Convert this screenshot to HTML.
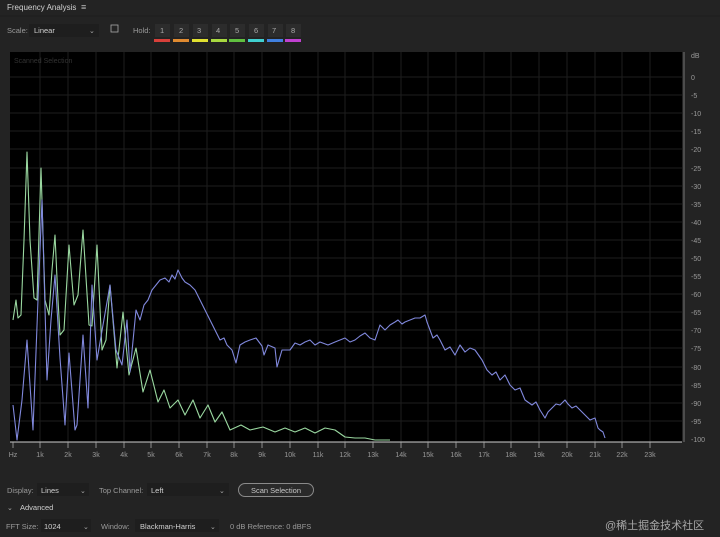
<!DOCTYPE html>
<html><head><meta charset="utf-8"><style>
html,body{margin:0;padding:0;background:#232323;width:720px;height:537px;overflow:hidden;font-family:"Liberation Sans","Noto Sans CJK SC",sans-serif;}
svg text{font-family:"Liberation Sans","Noto Sans CJK SC",sans-serif;}
</style></head><body>
<svg width="720" height="537" viewBox="0 0 720 537" xmlns="http://www.w3.org/2000/svg">
<rect width="720" height="537" fill="#232323"/>
<text x="7" y="10" font-size="8" fill="#d0d0d0">Frequency Analysis</text>
<text x="81" y="10" font-size="9" fill="#bbb">≡</text>
<line x1="0" y1="16" x2="720" y2="16" stroke="#1c1c1c"/>
<text x="7" y="33" font-size="7.5" fill="#9a9a9a">Scale:</text>
<rect x="29" y="24" width="70" height="13" fill="#1e1e1e"/>
<text x="34" y="33" font-size="7.5" fill="#d0d0d0">Linear</text>
<text x="89" y="33" font-size="7" fill="#aaa">⌄</text>
<rect x="111" y="25" width="7" height="7" fill="none" stroke="#aaa" stroke-width="0.8"/>
<text x="133" y="33" font-size="7.5" fill="#9a9a9a">Hold:</text>
<g font-size="7.5" fill="#aaa">
<rect x="155" y="24" width="15" height="13" fill="#2c2c2c"/><text x="160" y="33">1</text>
<rect x="174" y="24" width="15" height="13" fill="#2c2c2c"/><text x="179" y="33">2</text>
<rect x="193" y="24" width="15" height="13" fill="#2c2c2c"/><text x="197" y="33">3</text>
<rect x="212" y="24" width="15" height="13" fill="#2c2c2c"/><text x="216" y="33">4</text>
<rect x="230" y="24" width="15" height="13" fill="#2c2c2c"/><text x="235" y="33">5</text>
<rect x="249" y="24" width="15" height="13" fill="#2c2c2c"/><text x="254" y="33">6</text>
<rect x="268" y="24" width="15" height="13" fill="#2c2c2c"/><text x="272" y="33">7</text>
<rect x="286" y="24" width="15" height="13" fill="#2c2c2c"/><text x="291" y="33">8</text>
</g>
<rect x="154" y="39" width="16" height="3" fill="#d8403a"/>
<rect x="173" y="39" width="16" height="3" fill="#e08a30"/>
<rect x="192" y="39" width="16" height="3" fill="#e0e030"/>
<rect x="211" y="39" width="16" height="3" fill="#a8d840"/>
<rect x="229" y="39" width="16" height="3" fill="#60c040"/>
<rect x="248" y="39" width="16" height="3" fill="#40d0d0"/>
<rect x="267" y="39" width="16" height="3" fill="#4080e0"/>
<rect x="285" y="39" width="16" height="3" fill="#c040d0"/>
<rect x="10" y="52" width="672" height="390" fill="#000"/>
<g stroke="#1e1e1e" stroke-width="1">
<path d="M40 52V442M68 52V442M96 52V442M124 52V442M151 52V442M179 52V442M207 52V442M234 52V442M262 52V442M290 52V442M318 52V442M345 52V442M373 52V442M401 52V442M428 52V442M456 52V442M484 52V442M511 52V442M539 52V442M567 52V442M595 52V442M622 52V442M650 52V442"/>
<path d="M10 77H682M10 95H682M10 113H682M10 131H682M10 149H682M10 168H682M10 186H682M10 204H682M10 222H682M10 240H682M10 258H682M10 276H682M10 294H682M10 312H682M10 330H682M10 348H682M10 367H682M10 385H682M10 403H682M10 421H682"/>
</g>
<text x="14" y="63" font-size="7" fill="#333">Scanned Selection</text>
<polyline fill="none" stroke="#9ad8a0" stroke-width="1.1" stroke-linejoin="round" points="13,320 16,300 18,318 21,315 24,240 27,152 30,240 34,298 37,300 41,168 45,300 49,315 52,270 55,235 58,300 60,335 64,330 69,245 74,305 78,295 83,230 89,325 92,326 97,245 102,350 106,340 110,285 117,368 123,312 129,375 136,348 143,392 150,370 158,402 164,390 170,408 178,400 185,415 193,400 200,418 208,405 215,422 222,412 230,430 241,425 250,430 263,427 275,432 285,428 295,432 305,428 315,433 325,428 335,430 345,437 355,438 365,438 375,440 390,440"/>
<polyline fill="none" stroke="#8088dc" stroke-width="1.1" stroke-linejoin="round" points="13,405 17,440 22,400 27,340 33,430 38,300 42,200 47,380 51,320 55,275 60,358 65,425 69,353 75,430 77,425 83,335 88,408 92,285 97,360 103,325 110,285 116,350 122,365 127,320 130,372 136,310 140,320 144,305 148,300 152,290 156,285 160,280 165,278 169,282 172,275 175,279 178,270 182,278 185,282 190,285 195,290 200,300 205,310 210,320 215,330 220,340 224,338 227,345 232,350 236,363 240,345 245,342 250,340 256,338 262,346 264,355 268,345 275,348 277,367 282,350 290,350 295,343 300,345 305,342 310,340 315,345 320,342 328,345 335,342 340,340 345,338 350,342 355,340 360,336 365,333 370,338 375,340 380,325 385,330 390,325 395,322 398,320 402,324 405,322 410,320 415,318 420,318 425,315 427,322 433,338 437,335 440,340 445,350 450,347 455,355 460,345 465,352 470,348 475,350 482,360 487,370 492,375 496,372 500,380 505,375 510,385 515,390 520,388 525,400 532,405 536,402 540,410 545,418 548,412 552,408 556,404 560,405 565,400 568,404 572,408 576,406 580,410 585,415 590,420 595,418 598,428 600,430 603,432 605,438"/>
<line x1="10" y1="442" x2="682" y2="442" stroke="#cfcfcf" stroke-width="1"/>
<g stroke="#aaa" stroke-width="0.8">
<path d="M13 442v6M40 442v6M68 442v6M96 442v6M124 442v6M151 442v6M179 442v6M207 442v6M234 442v6M262 442v6M290 442v6M318 442v6M345 442v6M373 442v6M401 442v6M428 442v6M456 442v6M484 442v6M511 442v6M539 442v6M567 442v6M595 442v6M622 442v6M650 442v6"/>
</g>
<g font-size="7" fill="#9a9a9a" text-anchor="middle">
<text x="13" y="457">Hz</text><text x="40" y="457">1k</text><text x="68" y="457">2k</text><text x="96" y="457">3k</text><text x="124" y="457">4k</text><text x="151" y="457">5k</text><text x="179" y="457">6k</text><text x="207" y="457">7k</text><text x="234" y="457">8k</text><text x="262" y="457">9k</text><text x="290" y="457">10k</text><text x="318" y="457">11k</text><text x="345" y="457">12k</text><text x="373" y="457">13k</text><text x="401" y="457">14k</text><text x="428" y="457">15k</text><text x="456" y="457">16k</text><text x="484" y="457">17k</text><text x="511" y="457">18k</text><text x="539" y="457">19k</text><text x="567" y="457">20k</text><text x="595" y="457">21k</text><text x="622" y="457">22k</text><text x="650" y="457">23k</text>
</g>
<line x1="684" y1="52" x2="684" y2="442" stroke="#8a8a8a" stroke-width="0.8"/>
<g font-size="7" fill="#9a9a9a">
<text x="691" y="58">dB</text><text x="691" y="80">0</text><text x="691" y="98">-5</text><text x="691" y="116">-10</text><text x="691" y="134">-15</text><text x="691" y="152">-20</text><text x="691" y="171">-25</text><text x="691" y="189">-30</text><text x="691" y="207">-35</text><text x="691" y="225">-40</text><text x="691" y="243">-45</text><text x="691" y="261">-50</text><text x="691" y="279">-55</text><text x="691" y="297">-60</text><text x="691" y="315">-65</text><text x="691" y="333">-70</text><text x="691" y="351">-75</text><text x="691" y="370">-80</text><text x="691" y="388">-85</text><text x="691" y="406">-90</text><text x="691" y="424">-95</text><text x="691" y="442">-100</text>
</g>
<text x="7" y="493" font-size="7.5" fill="#9a9a9a">Display:</text>
<rect x="37" y="483" width="52" height="13" fill="#1e1e1e"/>
<text x="41" y="493" font-size="7.5" fill="#d0d0d0">Lines</text>
<text x="80" y="493" font-size="7" fill="#aaa">⌄</text>
<text x="99" y="493" font-size="7.5" fill="#9a9a9a">Top Channel:</text>
<rect x="147" y="483" width="82" height="13" fill="#1e1e1e"/>
<text x="151" y="493" font-size="7.5" fill="#d0d0d0">Left</text>
<text x="219" y="493" font-size="7" fill="#aaa">⌄</text>
<rect x="238.5" y="483.5" width="75" height="13" rx="6.5" fill="#2a2a2a" stroke="#8a8a8a" stroke-width="1"/>
<text x="276" y="493" font-size="7.5" fill="#c8c8c8" text-anchor="middle">Scan Selection</text>
<text x="7" y="510" font-size="7" fill="#aaa">⌄</text>
<text x="20" y="510" font-size="7.5" fill="#d0d0d0">Advanced</text>
<text x="6" y="529" font-size="7.5" fill="#9a9a9a">FFT Size:</text>
<rect x="41" y="519" width="50" height="13" fill="#1e1e1e"/>
<text x="44" y="529" font-size="7.5" fill="#d0d0d0">1024</text>
<text x="83" y="529" font-size="7" fill="#aaa">⌄</text>
<text x="101" y="529" font-size="7.5" fill="#9a9a9a">Window:</text>
<rect x="135" y="519" width="84" height="13" fill="#1e1e1e"/>
<text x="140" y="529" font-size="7.5" fill="#d0d0d0">Blackman-Harris</text>
<text x="210" y="529" font-size="7" fill="#aaa">⌄</text>
<text x="230" y="529" font-size="7.5" fill="#9a9a9a">0 dB Reference:  0 dBFS</text>
<text x="605" y="529" font-size="11" fill="#a8a8a8">@稀土掘金技术社区</text>
</svg>
</body></html>
